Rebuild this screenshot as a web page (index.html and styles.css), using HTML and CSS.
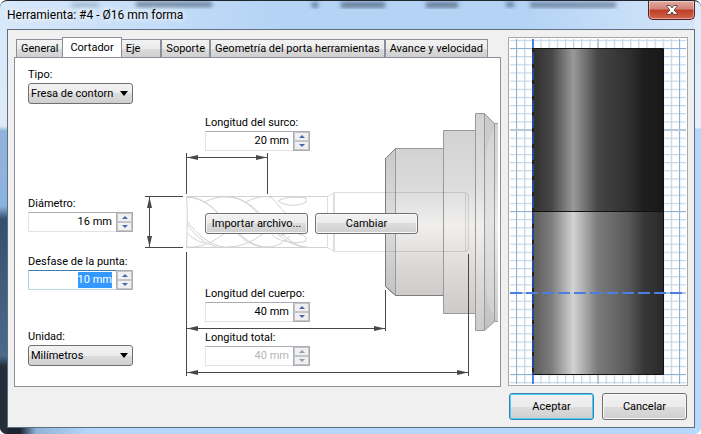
FILE: index.html
```
<!DOCTYPE html>
<html lang="es">
<head>
  <meta charset="UTF-8">
  <meta name="viewport" content="width=device-width, initial-scale=1.0">
  <title>Herramienta: #4 - Ø16 mm forma</title>
  <link rel="stylesheet" href="styles.css">
</head>
<body>

<div class="window">
  <header class="titlebar">
    <svg class="glass" viewBox="0 0 701 29" preserveAspectRatio="none" aria-hidden="true">
      <defs><filter id="soft"><feGaussianBlur stdDeviation="2"/></filter></defs>
      <g filter="url(#soft)" fill="#2b3d55">
        <rect x="136" y="1" width="76" height="5" opacity=".6"/>
        <rect x="72" y="2" width="26" height="4" opacity=".3"/>
        <rect x="312" y="1" width="6" height="6" opacity=".6"/>
        <rect x="341" y="1" width="44" height="6" opacity=".6"/>
        <rect x="426" y="1" width="32" height="6" opacity=".6"/>
        <rect x="506" y="1" width="8" height="5" opacity=".6"/>
        <rect x="530" y="1" width="86" height="6" opacity=".5"/>
      </g>
    </svg>
    <h1>Herramienta: #4 - Ø16 mm forma</h1>
    <button class="close" aria-label="Cerrar">
      <svg viewBox="0 0 12 10" width="12" height="10">
        <path d="M1 .5h3l2 2.400L8 .5h3v1.200L8 5l3 3.300v1.200H8L6 7.100 4 9.500H1V8.300L4 5 1 1.700z" fill="#fff" stroke="#5b4048"/>
      </svg>
    </button>
  </header>

  <main class="client">
    <section class="editor">
      <div class="tabs" role="tablist">
        <button role="tab">General</button>
        <button role="tab" class="active" aria-selected="true">Cortador</button>
        <button role="tab" class="short">Eje</button>
        <button role="tab">Soporte</button>
        <button role="tab">Geometría del porta herramientas</button>
        <button role="tab">Avance y velocidad</button>
      </div>

      <div class="panel" role="tabpanel">
        <svg class="diagram" viewBox="15 58 485 328" width="485" height="328" aria-hidden="true">
          <defs>
            <linearGradient id="metal" x1="0" y1="0" x2="0" y2="1">
              <stop offset="0" stop-color="#d2d2d2"/>
              <stop offset=".3" stop-color="#dcdcdc"/>
              <stop offset=".52" stop-color="#f0efee"/>
              <stop offset=".75" stop-color="#dddcdb"/>
              <stop offset="1" stop-color="#cccbca"/>
            </linearGradient>
            <linearGradient id="metalDark" x1="0" y1="0" x2="0" y2="1">
              <stop offset="0" stop-color="#c8c8c8"/>
              <stop offset=".5" stop-color="#dedede"/>
              <stop offset="1" stop-color="#c2c2c2"/>
            </linearGradient>
          </defs>

          <!-- holder -->
          <g stroke="#9a9a9a" fill="url(#metal)">
            <path d="M395.500 148.500H443.500V295.500H395.500z"/>
            <path d="M385.500 158.500L395.500 148.500V295.500L385.500 286.500z" fill="url(#metalDark)"/>
            <path d="M443.500 130.500H475.500V313.500H443.500z"/>
            <path d="M475.500 113.500H484.500V330.500H475.500z"/>
            <path d="M484.500 113.500L494.500 123.500V321.500L484.500 330.500z" fill="url(#metalDark)"/>
            <path d="M498 123.500H494.500V321.500H498" />
          </g>
          <path d="M494 131Q487 139 486 158V290Q488 306 494 315z" fill="#fff" opacity=".18"/>
          <path d="M385.500 158.500L395.500 148.500M385.500 286.500L395.500 295.500H443.500M385.500 158.500V286.500" fill="none" stroke="#7c7c7c"/>

          <!-- shank -->
          <g fill="none" stroke="#777" stroke-opacity=".24">
            <path d="M327.500 196.500L334.500 192.500H465.500Q468.500 193 468.500 196V249Q468.500 251 465.500 251.500H334.500L327.500 247.500z"/>
            <path d="M334 193V251" stroke-width="2"/>
            <path d="M465.500 193V251"/>
          </g>

          <!-- flutes -->
          <g fill="none" stroke="#d2d2d2">
            <path d="M186.500 196.500H327.500M186.500 247.500H327.500M186.500 196.500C188 212 187 230 186.500 247.500"/>
            <path d="M187 197C206 197 216 212 228 224S248 247 268 247.500"/>
            <path d="M187 197C210 199 219 215 231 226S252 247 270 247.500"/>
            <path d="M205 202C214 197 228 195 239 199C257 206 266 222 279 232S297 247 310 247.500"/>
            <path d="M225 197C244 196 253 209 264 220S286 246 308 247.500"/>
            <path d="M246 202C256 197 266 195 272 198C280 207 288 217 300 226"/>
            <path d="M187 221C197 234 208 245 226 247.500"/>
            <path d="M187 224C196 237 204 243 218 247.500"/>
            <path d="M187 233C192 238 198 242 205 243"/>
            <path d="M186 247C208 248 216 238 226 233"/>
            <path d="M226 247C247 247 256 238 266 232"/>
            <path d="M266 247C276 247 282 244 290 236"/>
            <path d="M278 201C286 196 298 197 306 198V202C300 206 286 207 278 201z"/>
            <path d="M272 235C280 243 300 244 306 241V237C299 232 288 232 279 236"/>
          </g>

          <!-- dimension lines -->
          <g stroke="#484848" fill="none">
            <path d="M186.500 153V194M267.500 153V194M186.500 157.500H267.500"/>
            <path d="M145 196.500H183M145 247.500H183M149.500 197V247"/>
            <path d="M186.500 252V376M385.500 290V331M468.500 254V376"/>
            <path d="M187 328.500H385M187 372.500H468"/>
          </g>
          <g fill="#484848">
            <path d="M187 157.500L198 155V160zM267 157.500L256 155V160z"/>
            <path d="M149.500 197L147 208H152zM149.500 247L147 236H152z"/>
            <path d="M187 328.500L198 326V331zM385 328.500L374 326V331z"/>
            <path d="M187 372.500L198 370V375zM468 372.500L457 370V375z"/>
          </g>
        </svg>

        <div class="column column-tool">
          <div class="field">
            <label for="tipo">Tipo:</label>
            <div class="select">
              <select id="tipo"><option>Fresa de contorn</option></select>
            </div>
          </div>
          <div class="field diameter">
            <label for="diametro">Diámetro:</label>
            <div class="spin">
              <input id="diametro" type="text" value="16 mm">
              <span class="arrows"><button aria-label="Más"></button><button aria-label="Menos"></button></span>
            </div>
          </div>
          <div class="field offset">
            <label for="desfase">Desfase de la punta:</label>
            <div class="spin focused">
              <input id="desfase" type="text" value="10 mm" autofocus>
              <span class="arrows"><button aria-label="Más"></button><button aria-label="Menos"></button></span>
            </div>
          </div>
          <div class="field unit">
            <label for="unidad">Unidad:</label>
            <div class="select">
              <select id="unidad"><option>Milímetros</option></select>
            </div>
          </div>
        </div>

        <div class="column column-lengths">
          <div class="field">
            <label for="surco">Longitud del surco:</label>
            <div class="spin">
              <input id="surco" type="text" value="20 mm">
              <span class="arrows"><button aria-label="Más"></button><button aria-label="Menos"></button></span>
            </div>
          </div>
          <div class="shape-actions">
            <button class="btn">Importar archivo...</button>
            <button class="btn">Cambiar</button>
          </div>
          <div class="field">
            <label for="cuerpo">Longitud del cuerpo:</label>
            <div class="spin">
              <input id="cuerpo" type="text" value="40 mm">
              <span class="arrows"><button aria-label="Más"></button><button aria-label="Menos"></button></span>
            </div>
          </div>
          <div class="field total">
            <label for="total">Longitud total:</label>
            <div class="spin">
              <input id="total" type="text" value="40 mm" disabled>
              <span class="arrows"><button aria-label="Más" disabled></button><button aria-label="Menos" disabled></button></span>
            </div>
          </div>
        </div>
      </div>
    </section>

    <aside class="side">
      <div class="preview">
        <svg viewBox="510 39 176 345" role="img" aria-label="Vista previa">
          <defs>
            <pattern id="minor" x="516" y="48" width="8.150" height="8.150" patternUnits="userSpaceOnUse">
              <path d="M0 .6H8.150M.6 0V8.150" stroke="#c3d4e6" stroke-width="1.200"/>
            </pattern>
            <linearGradient id="upper">
              <stop offset="0" stop-color="#303030"/>
              <stop offset=".14" stop-color="#464646"/>
              <stop offset=".31" stop-color="#999"/>
              <stop offset=".5" stop-color="#464646"/>
              <stop offset=".75" stop-color="#2e2e2e"/>
              <stop offset=".85" stop-color="#1e1e1e"/>
              <stop offset="1" stop-color="#191919"/>
            </linearGradient>
            <linearGradient id="lower">
              <stop offset="0" stop-color="#5c5c5c"/>
              <stop offset=".14" stop-color="#7c7c7c"/>
              <stop offset=".31" stop-color="#d2d2d2"/>
              <stop offset=".5" stop-color="#7a7a7a"/>
              <stop offset=".73" stop-color="#5a5a5a"/>
              <stop offset=".85" stop-color="#383838"/>
              <stop offset="1" stop-color="#2a2a2a"/>
            </linearGradient>
          </defs>
          <rect x="510" y="39" width="176" height="345" fill="url(#minor)"/>
          <path d="M516.500 39V384M679.500 39V384M510 48.500H686M510 211.500H686M510 374.500H686" stroke="#8fb2d4"/>
          <path d="M598 39V384M510 130H686M510 293H686" stroke="#b5c8dc" stroke-width="2"/>
          <rect x="533" y="48" width="130" height="163" fill="url(#upper)"/>
          <rect x="533" y="211" width="130" height="163" fill="url(#lower)"/>
          <path d="M533 48.500H663.500V374.500H533M533 211.500H663" fill="none" stroke="#111"/>
          <path d="M533 39V48M533 375V384" stroke="#4a80f0" stroke-width="2"/>
          <path d="M533 48V375" stroke="#222" stroke-width="2"/>
          <path d="M533 52V375" stroke="#234a96" stroke-width="2" stroke-dasharray="12 4"/>
          <path d="M510 293H686" stroke="#4a7fe0" stroke-width="2" stroke-dasharray="12 4"/>
        </svg>
      </div>
      <div class="dialog-buttons">
        <button class="btn default">Aceptar</button>
        <button class="btn">Cancelar</button>
      </div>
    </aside>
  </main>
</div>

<script>
  document.getElementById('desfase').select();
</script>

</body>
</html>
```

FILE: styles.css
```
* {
  box-sizing: border-box;
}

body {
  margin: 0;
  background: #fff;
  color: #000;
  font-family: Roboto, 'DejaVu Sans Condensed', sans-serif;
  font-size: 11px;
  line-height: 16px;
}

button, input, select {
  font: inherit;
  color: inherit;
  margin: 0;
}

.window {
  min-height: 100vh;
  display: flex;
  flex-direction: column;
  padding: 0 6px 6px 7px;
  border-top: 1px solid #20242c;
  border-radius: 7px;
  background:
    linear-gradient(#d5e8fc, #dfeaf6 125px, #8fb3da 130px, #8db4de 205px, #34506e 218px, #4a6a8c 355px, #252d38 365px) left / 7px 100% no-repeat,
    linear-gradient(#dceafa, #e4f0fc 127px, #b4d7fb 128px, #b8dafc) right / 7px 100% no-repeat,
    linear-gradient(90deg, #1c2430 20px, #8fb3d8 36px, #b4d7fb 90px) bottom / 100% 7px no-repeat,
    linear-gradient(90deg, #d8e8fa, #b4d3f5 40%, #b4d3f5 75%, #d6e6f9);
}

.titlebar {
  position: relative;
  display: flex;
  justify-content: space-between;
  height: 28px;
}

.glass {
  position: absolute;
  top: 0;
  left: -7px;
  width: calc(100% + 13px);
  height: 28px;
}

.titlebar h1 {
  position: relative;
  margin: 0;
  font-size: 12px;
  font-weight: normal;
  line-height: 28px;
  text-shadow: 0 0 6px #fff, 0 0 6px #fff;
}

.close {
  position: relative;
  display: flex;
  align-items: center;
  justify-content: center;
  width: 47px;
  height: 19px;
  padding: 0;
  border: 1px solid #54232a;
  border-top: 0;
  border-radius: 0 0 5px 5px;
  background: linear-gradient(#e2aaa0, #d08377 45%, #bd3c24 50%, #d4644c);
  box-shadow: inset 0 0 0 1px rgba(255, 255, 255, 0.4);
}

.client {
  flex: 1;
  display: flex;
  gap: 7px;
  padding: 7px 6px;
  border: 1px solid #5d6f80;
  background: #f0f0f0;
}

.editor {
  flex: 1;
  min-width: 0;
}

/* tabs */

.tabs {
  display: flex;
  align-items: flex-end;
  height: 20px;
  padding-left: 2px;
}

.tabs button {
  height: 18px;
  padding: 0 4px;
  border: 1px solid #8c8e9a;
  border-bottom: 0;
  background: linear-gradient(#f2f2f2, #ebebeb 50%, #dcdcdc 50%, #d0d0d0);
  white-space: nowrap;
}

.tabs button.active {
  position: relative;
  height: 21px;
  margin: 0 -1px -1px;
  padding: 0 7px;
  background: #fff;
}

.tabs button.short {
  padding-right: 20px;
}

.panel {
  position: relative;
  display: flex;
  gap: 72px;
  height: 330px;
  padding: 9px 13px;
  border: 1px solid #8c8e9a;
  background: #fff;
}

.diagram {
  position: absolute;
  top: 0;
  left: 0;
}

.column {
  position: relative;
}

.column-lengths {
  padding-top: 48px;
}

/* fields */

.field {
  width: 105px;
}

.field label {
  display: block;
  white-space: nowrap;
}

.diameter {
  margin-top: 92px;
}

.offset {
  margin-top: 22px;
}

.unit {
  margin-top: 39px;
}

.total {
  margin-top: 8px;
}

.select {
  position: relative;
}

.select::after {
  content: '';
  position: absolute;
  top: 8px;
  right: 5px;
  border: 4px solid transparent;
  border-top: 5px solid #000;
  border-bottom: 0;
}

.select select {
  appearance: none;
  display: block;
  width: 100%;
  height: 21px;
  padding: 0 2px;
  border: 1px solid #707070;
  border-radius: 3px;
  background: linear-gradient(#f2f2f2, #ebebeb 50%, #dddddd 50%, #cfcfcf);
}

.spin {
  display: flex;
  height: 20px;
  border: 1px solid #e2e3ea;
  border-top-color: #abadb3;
  background: #fff;
}

.spin input {
  flex: 1;
  min-width: 0;
  padding: 0 5px 0 0;
  border: 0;
  outline: 0;
  background: none;
  text-align: right;
}

.spin input::selection {
  background: #3399ff;
  color: #fff;
}

.spin input:disabled {
  color: #b4b4b4;
}

.spin.focused {
  border-color: #3d7bad #b5cfe7 #b7d9ed;
}

.arrows {
  display: flex;
  flex-direction: column;
  width: 17px;
  margin: -1px;
  border: 1px solid #abadb3;
}

.arrows button {
  flex: 1;
  display: flex;
  align-items: center;
  justify-content: center;
  padding: 0;
  border: 1px solid #c4c5ca;
  background: #f0f0f0;
}

.arrows button::before {
  content: '';
  border: 3px solid transparent;
  border-top: 0;
  border-bottom-color: #4a66b0;
}

.arrows button:last-child::before {
  transform: rotate(180deg);
}

.arrows button:disabled::before {
  border-bottom-color: #9a9a9a;
}

/* buttons */

.btn {
  height: 21px;
  padding: 0;
  border: 1px solid #707070;
  border-radius: 3px;
  background: linear-gradient(#f2f2f2, #ebebeb 50%, #dddddd 50%, #cfcfcf);
  box-shadow: inset 0 0 0 1px #f8f8f8;
  white-space: nowrap;
}

.btn.default {
  border-color: #3c7fb1;
  box-shadow: inset 0 0 0 1px #48d1f8;
}

.shape-actions {
  display: flex;
  gap: 7px;
  margin: 62px 0 52px;
}

.shape-actions .btn {
  width: 103px;
}

/* preview */

.side {
  width: 180px;
}

.preview {
  padding: 1px;
  border: 1px solid #a8a8a8;
  background: #fff;
}

.preview svg {
  display: block;
  width: 100%;
}

.dialog-buttons {
  display: grid;
  grid-template-columns: 1fr 1fr;
  gap: 8px;
  margin-top: 7px;
  padding: 0 1px;
}

.dialog-buttons .btn {
  height: 27px;
}
```
